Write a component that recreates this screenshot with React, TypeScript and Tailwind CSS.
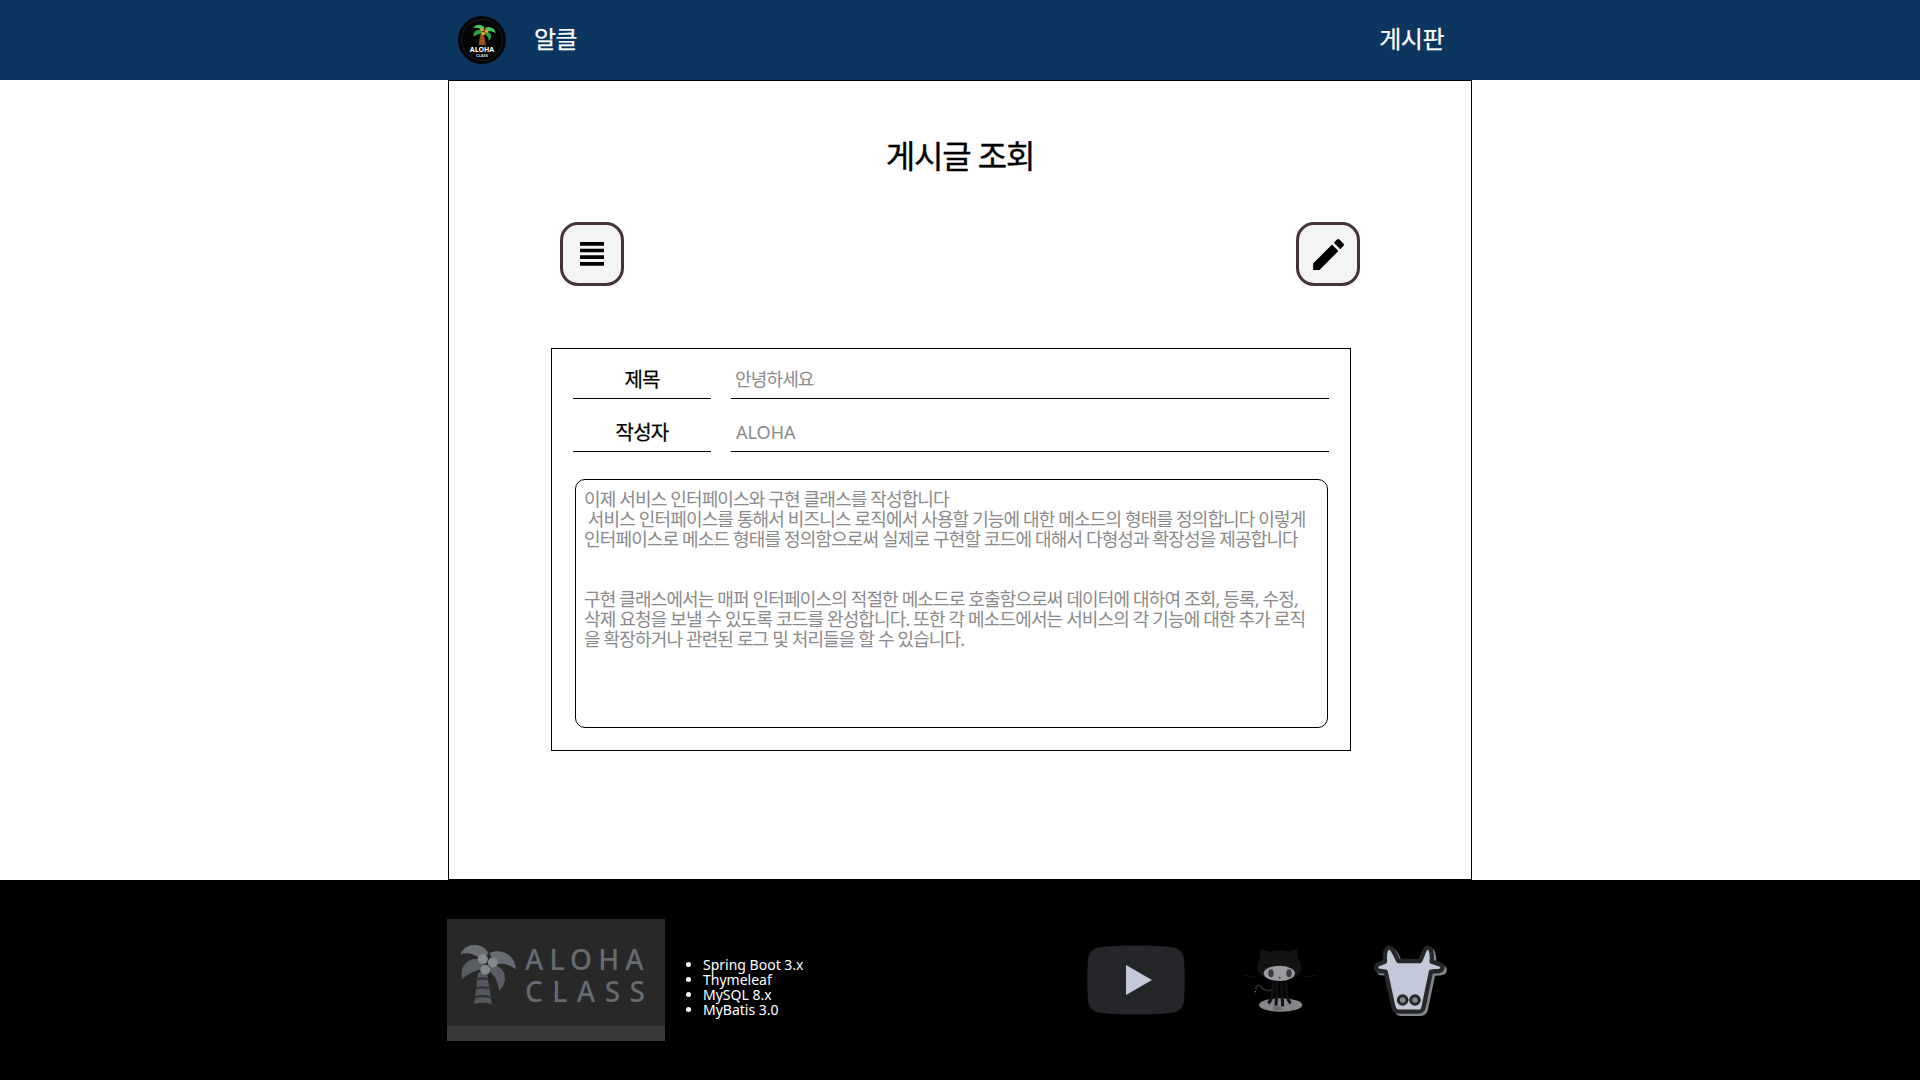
const FONT = "font-['Noto_Sans','Noto_Sans_CJK_KR',sans-serif]";

const LEAVES = {
  topLeft: "M30 75 C45 40 95 35 115 72 L95 95 C75 72 50 68 30 75 Z",
  right: "M118 72 C150 55 195 75 198 120 C170 100 150 102 135 106 Z",
  lowerLeft: "M95 92 C60 80 25 105 36 150 C50 135 75 125 100 118 Z",
  lowerRight: "M130 105 C175 120 172 165 147 185 C145 155 130 135 112 122 Z",
};

type PalmColors = { leaf: string; leafDark: string; trunk: string; stripe: string; nut: string };

const Palm = ({ leaf, leafDark, trunk, stripe, nut }: PalmColors) => (
  <>
    <path d="M84 130 L110 130 L125 225 C105 220 90 220 72 225 Z" fill={trunk} />
    <path d="M82 150 C92 147 102 147 112 150 M78 178 C90 174 104 174 116 178 M74 205 C90 200 106 200 120 205" stroke={stripe} strokeWidth="7" fill="none" />
    <path d={LEAVES.topLeft} fill={leaf} />
    <path d={LEAVES.right} fill={leaf} />
    <path d={LEAVES.lowerLeft} fill={leafDark} />
    <path d={LEAVES.lowerRight} fill={leafDark} />
    <circle cx="98" cy="90" r="15" fill={nut} />
    <circle cx="128" cy="100" r="15" fill={nut} />
    <circle cx="105" cy="122" r="15" fill={nut} />
  </>
);

const Logo = () => (
  <svg viewBox="0 0 48 48" className="w-12 h-12 block">
    <circle cx="24" cy="24" r="24" fill="#050505" />
    <circle cx="24" cy="24" r="20.500" fill="none" stroke="#333" strokeWidth="0.5" />
    <g transform="translate(11 3.400) scale(0.135 0.115)">
      <Palm leaf="#4cc25a" leafDark="#2f9e44" trunk="#a5561c" stripe="#8a4515" nut="#e0a526" />
    </g>
    <text x="24" y="35.500" textAnchor="middle" fill="#fff" fontSize="7" fontWeight="700" fontFamily="Noto Sans">ALOHA</text>
    <text x="24" y="41" textAnchor="middle" fill="#ddd" fontSize="4" fontWeight="700" fontFamily="Noto Sans">CLASS</text>
  </svg>
);

const FooterPalm = () => (
  <svg viewBox="20 30 190 200" className="w-[63px] h-[67px] block">
    <Palm leaf="#696c72" leafDark="#5a5d63" trunk="#55585e" stripe="#303134" nut="#85888e" />
  </svg>
);

const Octocat = () => (
  <svg viewBox="0 15 300 240" className="w-[100px] h-[80px] block">
    <ellipse cx="122" cy="210" rx="65" ry="20" fill="#85878b" />
    <path d="M100 214 L120 214 L128 226 L100 226 Z" fill="#6b6d71" />
    <path d="M100 135 C100 180 95 195 85 205 M112 135 L108 212 M124 135 L128 214 M138 135 C138 180 142 195 152 205" stroke="#111" strokeWidth="9" fill="none" />
    <path d="M48 165 C48 150 55 148 62 155 C70 165 85 170 98 165" stroke="#2b2b2b" strokeWidth="5" fill="none" />
    <circle cx="46" cy="170" r="2" fill="#aaa" />
    <path d="M62 42 L90 50 C108 45 130 45 148 50 L172 40 L175 70 C195 100 185 135 118 135 C50 135 42 100 60 70 Z" fill="#131313" />
    <ellipse cx="118" cy="115" rx="47" ry="23" fill="#9a9ca1" />
    <ellipse cx="93" cy="115" rx="8" ry="12" fill="#3b3c3f" />
    <ellipse cx="147" cy="115" rx="8" ry="12" fill="#3b3c3f" />
    <circle cx="119" cy="128" r="3" fill="#3b3c3f" />
    <path d="M12 120 L50 128 M190 125 L230 122" stroke="#1a1a1a" strokeWidth="2.500" />
  </svg>
);

const COW = "M72 38 C60 38 58 60 60 80 L40 88 C30 92 32 108 45 108 L62 110 L85 215 C88 226 92 230 100 230 L160 230 C170 230 174 226 176 215 L198 110 L222 108 C235 106 236 92 224 88 L200 80 C202 60 200 38 188 38 C178 38 175 60 165 78 L100 78 C90 60 84 38 72 38 Z";

const Cow = () => (
  <svg viewBox="0 15 300 240" className="w-[100px] h-[80px] block">
    <path d={COW} transform="translate(7 7)" fill="none" stroke="#84868c" strokeWidth="12" strokeLinejoin="round" />
    <path d={COW} fill="#c3c9d8" stroke="#26272b" strokeWidth="13" strokeLinejoin="round" />
    <circle cx="113" cy="195" r="13" fill="#84868c" stroke="#26272b" strokeWidth="9" />
    <circle cx="150" cy="195" r="13" fill="#84868c" stroke="#26272b" strokeWidth="9" />
  </svg>
);

const Row = ({ label, value, spaced }: { label: string; value: string; spaced?: boolean }) => (
  <div className="flex gap-5">
    <div className="w-[138px] h-[50px] border-b border-black flex items-end justify-center pb-1 text-xl tracking-[-0.8px] [-webkit-text-stroke:0.25px] text-black">{label}</div>
    <div className={`flex-1 h-[50px] border-b border-black flex items-end pb-[5px] text-lg text-[#8a8a8a] ${spaced ? "pl-[5px]" : "pl-1 tracking-[-0.85px]"}`}>{value}</div>
  </div>
);

export default function App() {
  return (
    <div className={`${FONT} min-h-[1080px] flex flex-col bg-white`}>
      <header className="h-20 bg-[#0c365f] flex justify-center">
        <div className="w-[1024px] flex items-center justify-between pl-[10px] pr-7">
          <div className="flex items-center gap-7">
            <Logo />
            <span className="pb-[3px] text-2xl tracking-[-0.5px] [-webkit-text-stroke:0.25px] text-white">알클</span>
          </div>
          <span className="pb-[3px] text-2xl tracking-[-0.5px] [-webkit-text-stroke:0.25px] text-white">게시판</span>
        </div>
      </header>

      <main className="w-[1024px] h-[800px] mx-auto border border-black pl-[102px]">
        <h1 className="ml-[-102px] mt-[50px] text-center text-[32px] leading-[50px] tracking-[-1.2px] [-webkit-text-stroke:0.35px] text-black">게시글 조회</h1>
        <div className="ml-[9px] w-[800px] mt-[41px] flex justify-between">
          <button className="w-16 h-16 rounded-[18px] border-[3px] border-[#453436] bg-[#f4f4f4] flex items-center justify-center">
            <svg viewBox="0 0 24 24" className="w-6 h-6">
              <path d="M0 0h24v3.700H0zM0 6.700h24v3.600H0zM0 13.300h24v3.700H0zM0 20h24v3.700H0z" fill="#000" />
            </svg>
          </button>
          <button className="w-16 h-16 rounded-[18px] border-[3px] border-[#453436] bg-[#f4f4f4] flex items-center justify-center">
            <svg viewBox="0 0 24 24" className="w-[41px] h-[41px]">
              <path d="M3 17.250V21h3.750L17.810 9.940l-3.750-3.750L3 17.250zM20.710 7.040a1 1 0 0 0 0-1.410l-2.340-2.340a1 1 0 0 0-1.410 0l-1.830 1.830 3.750 3.750 1.830-1.830z" fill="#000" />
            </svg>
          </button>
        </div>
        <section className="mt-[62px] w-[800px] h-[403px] border border-black px-[21px]">
          <Row label="제목" value="안녕하세요" />
          <div className="mt-[3px]">
            <Row label="작성자" value="ALOHA" spaced />
          </div>
          <div className="mt-[27px] ml-[2px] mr-[1px] h-[249px] rounded-[10px] border border-black pl-2 pr-[10px] pt-[9px] text-lg leading-5 tracking-[-0.85px] text-[#8a8a8a]">
            <p>이제 서비스 인터페이스와 구현 클래스를 작성합니다</p>
            <p>&nbsp;서비스 인터페이스를 통해서 비즈니스 로직에서 사용할 기능에 대한 메소드의 형태를 정의합니다 이렇게 인터페이스로 메소드 형태를 정의함으로써 실제로 구현할 코드에 대해서 다형성과 확장성을 제공합니다</p>
            <p className="mt-10">구현 클래스에서는 매퍼 인터페이스의 적절한 메소드로 호출함으로써 데이터에 대하여 조회, 등록, 수정, 삭제 요청을 보낼 수 있도록 코드를 완성합니다. 또한 각 메소드에서는 서비스의 각 기능에 대한 추가 로직을 확장하거나 관련된 로그 및 처리들을 할 수 있습니다.</p>
          </div>
        </section>
      </main>

      <footer className="h-[200px] bg-black flex justify-center">
        <div className="w-[1024px] flex items-center">
          <div className="w-[218px] h-[122px] -ml-[1px] bg-[#282828] flex flex-col justify-between mb-[1px]">
            <div className="flex items-start pl-[10px] pt-5 gap-[5px]">
              <FooterPalm />
              <div className="pt-[4px] text-[#666a71] text-[28px] leading-[32px] font-medium">
                <div className="tracking-[0.22em]">ALOHA</div>
                <div className="tracking-[0.34em]">CLASS</div>
              </div>
            </div>
            <div className="h-[15px] bg-[#3a3939]" />
          </div>
          <ul className="ml-6 mt-[14px] list-disc pl-[14px] text-sm leading-[15px] text-white">
            <li>Spring Boot 3.x</li>
            <li>Thymeleaf</li>
            <li>MySQL 8.x</li>
            <li>MyBatis 3.0</li>
          </ul>
          <div className="ml-auto flex items-center pr-[7px]">
            <svg viewBox="0 0 98 70" className="w-[98px] h-[70px] block">
              <path d="M14 2 C36 0 62 0 84 2 C92 3 96 7 97 14 C98 28 98 42 97 56 C96 63 92 67 84 68 C62 70 36 70 14 68 C6 67 2 63 1 56 C0 42 0 28 1 14 C2 7 6 3 14 2 Z" fill="#25262a" />
              <path d="M39 20 L65 35 L39 50 Z" fill="#c3c9d8" />
            </svg>
            <div className="ml-[55px]">
              <Octocat />
            </div>
            <div className="ml-[25px]">
              <Cow />
            </div>
          </div>
        </div>
      </footer>
    </div>
  );
}
